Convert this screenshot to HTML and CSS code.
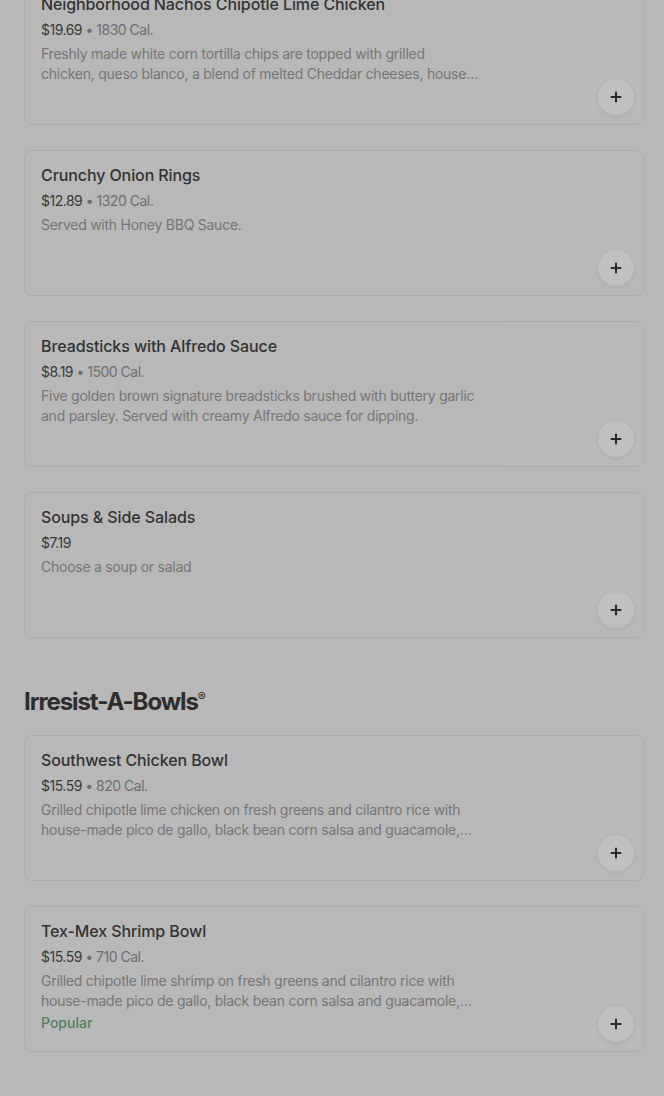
FILE: index.html
```html
<!DOCTYPE html>
<html>
<head>
<meta charset="utf-8">
<link rel="stylesheet" href="styles.css">
</head>
<body>
<main class="page">
  <section class="list first">
    <article class="card">
      <div class="info">
        <h3 class="title">Neighborhood Nachos Chipotle Lime Chicken</h3>
        <p class="meta"><span class="price">$19.69</span> • 1830 Cal.</p>
        <p class="desc">Freshly made white corn tortilla chips are topped with grilled chicken, queso blanco, a blend of melted Cheddar cheeses, house-made pico de gallo and jalapeños.</p>
      </div>
      <div class="thumb"></div>
      <button class="add" aria-label="Add"><svg viewBox="0 0 16 16" width="14" height="14"><path d="M8 2v12M2 8h12" stroke="#2b2b2b" stroke-width="2.4"/></svg></button>
    </article>
    <article class="card">
      <div class="info">
        <h3 class="title">Crunchy Onion Rings</h3>
        <p class="meta"><span class="price">$12.89</span> • 1320 Cal.</p>
        <p class="desc">Served with Honey BBQ Sauce.</p>
      </div>
      <div class="thumb"></div>
      <button class="add" aria-label="Add"><svg viewBox="0 0 16 16" width="14" height="14"><path d="M8 2v12M2 8h12" stroke="#2b2b2b" stroke-width="2.4"/></svg></button>
    </article>
    <article class="card">
      <div class="info">
        <h3 class="title">Breadsticks with Alfredo Sauce</h3>
        <p class="meta"><span class="price">$8.19</span> • 1500 Cal.</p>
        <p class="desc">Five golden brown signature breadsticks brushed with buttery garlic and parsley. Served with creamy Alfredo sauce for dipping.</p>
      </div>
      <div class="thumb"></div>
      <button class="add" aria-label="Add"><svg viewBox="0 0 16 16" width="14" height="14"><path d="M8 2v12M2 8h12" stroke="#2b2b2b" stroke-width="2.4"/></svg></button>
    </article>
    <article class="card">
      <div class="info">
        <h3 class="title">Soups &amp; Side Salads</h3>
        <p class="meta"><span class="price">$7.19</span></p>
        <p class="desc">Choose a soup or salad</p>
      </div>
      <div class="thumb"></div>
      <button class="add" aria-label="Add"><svg viewBox="0 0 16 16" width="14" height="14"><path d="M8 2v12M2 8h12" stroke="#2b2b2b" stroke-width="2.4"/></svg></button>
    </article>
  </section>

  <h2 class="section-title">Irresist-A-Bowls<sup>®</sup></h2>

  <section class="list">
    <article class="card">
      <div class="info">
        <h3 class="title">Southwest Chicken Bowl</h3>
        <p class="meta"><span class="price">$15.59</span> • 820 Cal.</p>
        <p class="desc">Grilled chipotle lime chicken on fresh greens and cilantro rice with house-made pico de gallo, black bean corn salsa and guacamole, topped with tortilla strips.</p>
      </div>
      <div class="thumb"></div>
      <button class="add" aria-label="Add"><svg viewBox="0 0 16 16" width="14" height="14"><path d="M8 2v12M2 8h12" stroke="#2b2b2b" stroke-width="2.4"/></svg></button>
    </article>
    <article class="card">
      <div class="info">
        <h3 class="title">Tex-Mex Shrimp Bowl</h3>
        <p class="meta"><span class="price">$15.59</span> • 710 Cal.</p>
        <p class="desc">Grilled chipotle lime shrimp on fresh greens and cilantro rice with house-made pico de gallo, black bean corn salsa and guacamole, topped with tortilla strips.</p>
        <p class="tag">Popular</p>
      </div>
      <div class="thumb"></div>
      <button class="add" aria-label="Add"><svg viewBox="0 0 16 16" width="14" height="14"><path d="M8 2v12M2 8h12" stroke="#2b2b2b" stroke-width="2.4"/></svg></button>
    </article>
  </section>
</main>
</body>
</html>
```

FILE: styles.css
```css
* { box-sizing: border-box; }
html, body { margin: 0; padding: 0; }
body {
  background: #b8b8b8;
  font-family: Inter, "Noto Sans", sans-serif;
  color: #333;
  overflow: hidden;
  height: 1096px;
}
.page {
  padding: 0 20px 0 24px;
}
.list {
  display: flex;
  flex-direction: column;
  gap: 25px;
}
.list.first {
  margin-top: -21px;
}
.card {
  position: relative;
  display: flex;
  height: 146px;
  border: 1px solid #adadad;
  border-radius: 8px;
  background: #b8b8b8;
  overflow: hidden;
}
.info {
  flex: 1;
  min-width: 0;
  padding: 14px 24px 0 16px;
}
.thumb {
  width: 140px;
  flex: none;
  background: #b9b9b9;
  border-left: 1px solid #b6b6b6;
}
.title {
  margin: 0;
  font-size: 16px;
  line-height: 20px;
  font-weight: 500;
  color: #333;
  white-space: nowrap;
  letter-spacing: -0.1px;
}
.meta {
  margin: 6px 0 0;
  font-size: 14px;
  line-height: 20px;
  color: #6e6e6e;
  letter-spacing: -0.5px;
}
.price { color: #3a3a3a; }
.desc {
  margin: 4px 0 0;
  font-size: 14px;
  line-height: 20px;
  color: #767676;
  letter-spacing: -0.25px;
  display: -webkit-box;
  -webkit-line-clamp: 2;
  -webkit-box-orient: vertical;
  overflow: hidden;
}
.tag {
  margin: 2px 0 0;
  font-size: 14px;
  line-height: 20px;
  font-weight: 500;
  color: #4f8262;
}
.add {
  position: absolute;
  right: 9px;
  bottom: 9px;
  width: 36px;
  height: 36px;
  border: none;
  border-radius: 50%;
  background: #c0c0c0;
  box-shadow: 0 1px 5px rgba(0,0,0,0.08);
  display: flex;
  align-items: center;
  justify-content: center;
  padding: 0;
}
.section-title {
  margin: 48px 0 17px;
  font-size: 24px;
  line-height: 32px;
  font-weight: 700;
  letter-spacing: -1.1px;
  color: #2e2e2e;
}
.section-title sup {
  font-size: 12px;
  font-weight: 500;
  vertical-align: 9px;
  line-height: 0;
  letter-spacing: 0;
}
```
